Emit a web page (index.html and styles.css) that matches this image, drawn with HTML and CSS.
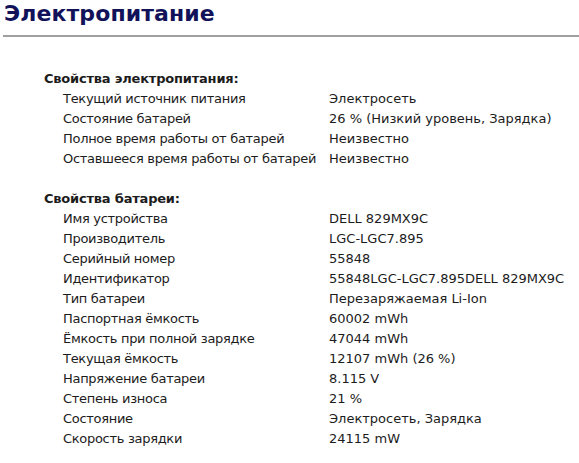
FILE: index.html
```html
<!DOCTYPE html>
<html lang="ru">
<head>
<meta charset="utf-8">
<title>Электропитание</title>
<link rel="stylesheet" href="styles.css">
</head>
<body>
<div class="page">
  <h1 class="title">Электропитание</h1>
  <div class="rule"></div>
  <div class="report">
    <div class="section">
      <div class="sec-head">Свойства электропитания:</div>
      <div class="rows">
        <div class="lbl">Текущий источник питания</div><div class="val">Электросеть</div>
        <div class="lbl">Состояние батарей</div><div class="val">26 % (Низкий уровень, Зарядка)</div>
        <div class="lbl">Полное время работы от батарей</div><div class="val">Неизвестно</div>
        <div class="lbl">Оставшееся время работы от батарей</div><div class="val">Неизвестно</div>
      </div>
    </div>
    <div class="section">
      <div class="sec-head">Свойства батареи:</div>
      <div class="rows">
        <div class="lbl">Имя устройства</div><div class="val">DELL 829MX9C</div>
        <div class="lbl">Производитель</div><div class="val">LGC-LGC7.895</div>
        <div class="lbl">Серийный номер</div><div class="val">55848</div>
        <div class="lbl">Идентификатор</div><div class="val">55848LGC-LGC7.895DELL 829MX9C</div>
        <div class="lbl">Тип батареи</div><div class="val">Перезаряжаемая Li-Ion</div>
        <div class="lbl">Паспортная ёмкость</div><div class="val">60002 mWh</div>
        <div class="lbl">Ёмкость при полной зарядке</div><div class="val">47044 mWh</div>
        <div class="lbl">Текущая ёмкость</div><div class="val">12107 mWh (26 %)</div>
        <div class="lbl">Напряжение батареи</div><div class="val">8.115 V</div>
        <div class="lbl">Степень износа</div><div class="val">21 %</div>
        <div class="lbl">Состояние</div><div class="val">Электросеть, Зарядка</div>
        <div class="lbl">Скорость зарядки</div><div class="val">24115 mW</div>
      </div>
    </div>
  </div>
</div>
</body>
</html>
```
FILE: styles.css
```css
html, body {
  margin: 0;
  padding: 0;
  background: #ffffff;
}
.page {
  font-family: "DejaVu Sans", Verdana, sans-serif;
  color: #1c1c1c;
  padding-top: 1px;
}
.title {
  margin: 0 0 0 4px;
  font-size: 22px;
  line-height: 26px;
  font-weight: bold;
  color: #12125a;
  letter-spacing: 0.1px;
}
.rule {
  margin: 8px 0 0 3px;
  height: 2px;
  background: #a0a0a0;
}
.report {
  padding: 32px 0 0 44px;
  font-size: 13px;
  line-height: 20px;
}
.section + .section {
  margin-top: 20px;
}
.sec-head {
  font-weight: bold;
  letter-spacing: -0.2px;
}
.rows {
  display: grid;
  grid-template-columns: 266px auto;
  padding-left: 19px;
}
.lbl {
  letter-spacing: -0.3px;
  white-space: nowrap;
}
.val {
  white-space: nowrap;
}
```
